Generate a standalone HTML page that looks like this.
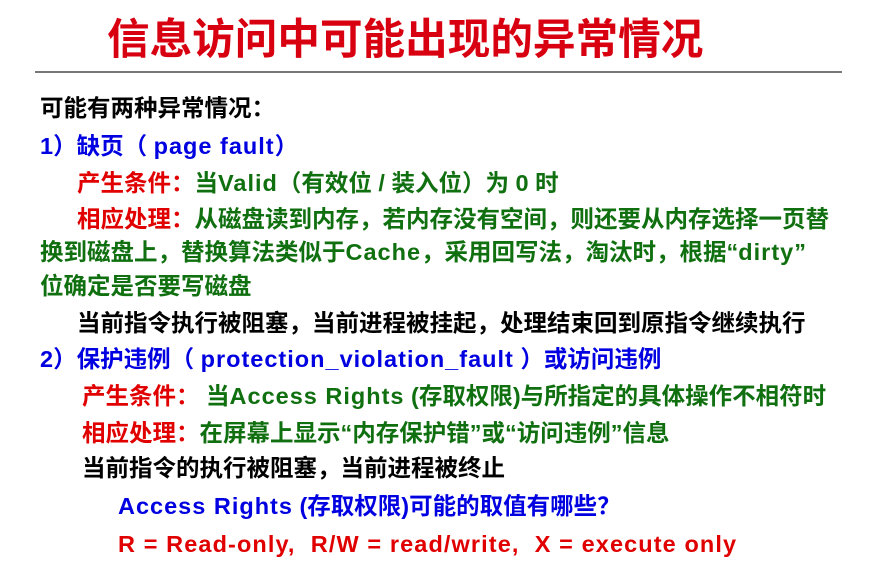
<!DOCTYPE html>
<html><head><meta charset="utf-8"><style>
body{margin:0;width:892px;height:579px;background:#fff;position:relative;overflow:hidden;font-family:"Liberation Sans","Noto Sans CJK SC",sans-serif;}
.l{position:absolute;white-space:nowrap;font-size:23.5px;font-weight:bold;line-height:30px;}
.b{color:#0000e0}.g{color:#107010}.r{color:#e00000}.k{color:#000}
.e{letter-spacing:1px}
</style></head><body>
<div class="l r" style="left:107px;top:12px;font-size:42.6px;line-height:56px;font-weight:bold;color:#d80010">信息访问中可能出现的异常情况</div>
<div style="position:absolute;left:35px;top:71px;width:807px;height:2px;background:#777"></div>
<div class="l k" style="left:40px;top:93px">可能有两种异常情况：</div>
<div class="l b" style="left:40px;top:131px">1）缺页（ <span class="e">page fault</span>）</div>
<div class="l g" style="left:77px;top:168px"><span class="r">产生条件：</span>当<span class="e">Valid</span>（有效位 / 装入位）为 0 时</div>
<div class="l g" style="left:77px;top:204px"><span class="r">相应处理：</span>从磁盘读到内存，若内存没有空间，则还要从内存选择一页替</div>
<div class="l g" style="left:40px;top:237px">换到磁盘上，替换算法类似于<span class="e">Cache</span>，采用回写法，淘汰时，根据“<span class="e">dirty</span>”</div>
<div class="l g" style="left:40px;top:271px">位确定是否要写磁盘</div>
<div class="l k" style="left:77px;top:308px">当前指令执行被阻塞，当前进程被挂起，处理结束回到原指令继续执行</div>
<div class="l b" style="left:40px;top:344px">2）保护违例（ <span class="e">protection_violation_fault</span> ）或访问违例</div>
<div class="l g" style="left:82px;top:381px"><span class="r">产生条件：</span> 当<span class="e">Access Rights</span> (存取权限)与所指定的具体操作不相符时</div>
<div class="l g" style="left:82px;top:418px"><span class="r">相应处理：</span>在屏幕上显示“内存保护错”或“访问违例”信息</div>
<div class="l k" style="left:82px;top:453px">当前指令的执行被阻塞，当前进程被终止</div>
<div class="l b" style="left:118px;top:491px"><span class="e">Access Rights</span> (存取权限)可能的取值有哪些？</div>
<div class="l r e" style="left:118px;top:529px;letter-spacing:1.1px">R = Read-only,&nbsp; R/W = read/write,&nbsp; X = execute only</div>
</body></html>
